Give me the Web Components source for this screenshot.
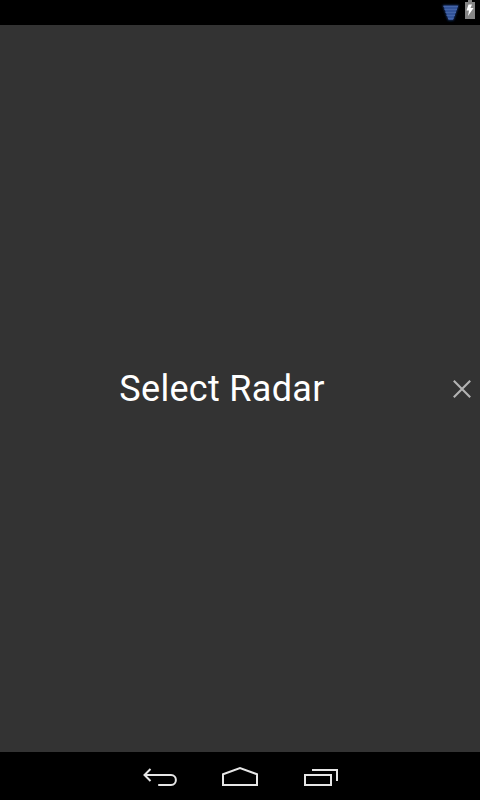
<!DOCTYPE html>
<html lang="en"><head><meta charset="utf-8"><title>Select Radar</title>
<style>html,body{margin:0;height:100%;background:#333;overflow:hidden}</style></head>
<body><radar-app></radar-app>
<script>
function define(name, html) {
  const t = document.createElement('template');
  t.innerHTML = html;
  customElements.define(name, class extends HTMLElement {
    constructor() {
      super();
      this.attachShadow({mode: 'open'}).appendChild(t.content.cloneNode(true));
    }
  });
}
define('status-bar', `<style>
:host{display:flex;justify-content:flex-end;height:25px;background:#000}
svg{display:block}
</style>
<svg width="44" height="25" viewBox="0 0 44 25">
<defs><filter id="g" x="-40%" y="-40%" width="180%" height="180%"><feGaussianBlur stdDeviation="1.1"/></filter></defs>
<path d="M6.5 5h16.500l-5.500 15.500h-5.500z" fill="#1c3468" filter="url(#g)"/>
<path d="M7.300 5.500h15l-5.300 14.500h-4.400z" fill="#33549a"/>
<path d="M7.500 6.500h14.500M8.500 9.500h12.500M9.500 12.500h10.500M10.500 15.500h8.500M12 18.500h5.500" stroke="#4565a8"/>
<path d="M32 0h4v2h3v17H29V2h3z" fill="#858585"/>
<path d="M32.500 4.500h3.500l-1.500 3.500h3L32 16l1-5.500h-2.500z" fill="#fff"/>
</svg>`);
define('close-button', `<style>
:host{display:block;width:36px;height:36px}
svg{display:block}
</style>
<svg width="36" height="36" viewBox="0 0 36 36"><path d="M9.800 9.800l16.400 16.400M26.200 9.800L9.800 26.200" stroke="#b3b3b3" stroke-width="2.100"/></svg>`);
define('radar-prompt', `<style>
:host{display:flex;align-items:center;background:#333;color:#fff;box-sizing:border-box}
.label{flex:1;text-align:center;font:400 36px/42px Roboto,"Noto Sans",sans-serif;letter-spacing:.3px}
</style><div class="label"><slot></slot></div><close-button></close-button>`);
define('nav-bar', `<style>
:host{display:flex;justify-content:center;gap:31px;height:48px;background:#000}
svg{display:block;fill:none;stroke:#e6e6e6;stroke-width:2}
</style>
<svg width="50" height="48" viewBox="0 4 50 48"><path d="M10.500 27H37c6.500 0 6.500 10 0 10H24.200M16.500 21l-6 6 6 6"/></svg>
<svg width="50" height="48" viewBox="0 4 50 48"><path d="M8 37V26.200L25 20l17 6.200V37z"/></svg>
<svg width="50" height="48" viewBox="0 4 50 48"><path d="M9 27h26v10H9zM16 22h25v11"/></svg>`);
define('radar-app', `<style>
:host{display:grid;grid-template-rows:25px 1fr 48px;height:100vh}
</style><status-bar></status-bar><radar-prompt>Select Radar</radar-prompt><nav-bar></nav-bar>`);
</script></body></html>
